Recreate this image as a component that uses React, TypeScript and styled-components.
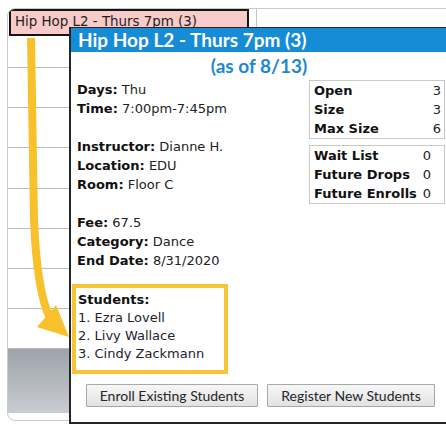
import React from 'react';
import styled, { createGlobalStyle } from 'styled-components';

const GlobalStyle = createGlobalStyle`
  html, body {
    margin: 0;
    padding: 0;
    background: #ffffff;
  }
`;

const Frame = styled.div`
  position: relative;
  width: 446px;
  height: 425px;
  overflow: hidden;
  background: #fff;
`;

// calendar grid that sits behind the class popup
const Calendar = styled.div`
  margin: 8px 0 0 7px;
  width: 460px;
  height: 413px;
  box-sizing: border-box;
  border: 1px solid #c9c9c9;
  border-radius: 8px 0 0 8px;
  display: flex;
  flex-direction: column;
  overflow: hidden;
`;

const Row = styled.div<{ $h: number; $open?: boolean }>`
  display: flex;
  height: ${(p) => p.$h}px;
  flex: none;
  border-bottom: ${(p) => (p.$open ? 'none' : '1px solid #bcbcbc')};
  box-sizing: border-box;
`;

const EventCell = styled.div`
  width: 240px;
  margin-left: 1px;
  box-sizing: border-box;
  border: 2px solid #151515;
  background: #f8caca;
  padding: 3px 0 0 4px;
  font: 13.4px/16px 'DejaVu Sans', sans-serif;
  color: #1e1e1e;
  white-space: nowrap;
  overflow: hidden;
`;

const Cell = styled.div`
  flex: 1;
  margin-left: 7px;
  border-left: 1px solid #c4c4c4;
`;

const GrayBand = styled.div`
  height: 64px;
  flex: none;
  background: linear-gradient(#9ea3ab, #c9ccd1);
`;

const ArrowLayer = styled.svg`
  position: absolute;
  left: 0;
  top: 0;
  pointer-events: none;
`;

const Popup = styled.div`
  position: absolute;
  left: 69px;
  top: 27px;
  width: 384px;
  height: 397px;
  box-sizing: border-box;
  background: #fff;
  border: 2px solid #262626;
  border-top-width: 1px;
  display: flex;
  flex-direction: column;
  font-family: 'DejaVu Sans', sans-serif;
  font-size: 13px;
  color: #222;
`;

const TitleBar = styled.div`
  height: 24px;
  background: #168bd6;
  color: #fff;
  font: bold 19px/24px Lato, sans-serif;
  padding-left: 7px;
  white-space: nowrap;
`;

const Subtitle = styled.div`
  text-align: center;
  color: #2088d2;
  font: bold 19px/24px Lato, sans-serif;
  margin-top: 2px;
  padding-right: 4px;
`;

const Body = styled.div`
  display: flex;
  justify-content: space-between;
  padding: 2px 6px 0 6px;
`;

const Info = styled.div`
  display: flex;
  flex-direction: column;
  gap: 19px;
  line-height: 19px;
  white-space: nowrap;
`;

const Group = styled.div``;

const Label = styled.b`
  color: #111;
`;

const Stats = styled.div`
  display: flex;
  flex-direction: column;
  gap: 6px;
  width: 136px;
`;

const StatBox = styled.div`
  border: 1px solid #c9c9c9;
  padding: 0 3px 0 4px;
`;

const StatTable = styled.table<{ $full?: boolean }>`
  border-collapse: collapse;
  width: ${(p) => (p.$full ? '100%' : 'auto')};
  font-size: 13px;
  line-height: 19px;
  td {
    padding: 0;
    white-space: nowrap;
  }
  td:first-child {
    font-weight: bold;
    color: #111;
    padding-right: 6px;
  }
  td:last-child {
    text-align: ${(p) => (p.$full ? 'right' : 'left')};
  }
`;

const Students = styled.div`
  margin: 14px 0 0 1px;
  width: 156px;
  height: 90px;
  box-sizing: border-box;
  border: 4px solid #f6c434;
  padding: 3px 0 0 2px;
  line-height: 18px;
  color: #24222e;
`;

const Buttons = styled.div`
  display: flex;
  gap: 9px;
  margin: 10px 0 0 15px;
`;

const Button = styled.button<{ $w: number }>`
  width: ${(p) => p.$w}px;
  height: 23px;
  border: 1px solid #a8a8a8;
  border-radius: 1px;
  background: linear-gradient(#f7f7f7, #e2e2e2);
  font: 14px/19px Lato, sans-serif;
  color: #26262c;
  padding: 0;
`;

const gridRows = [32, 40, 40, 41, 40, 40, 40, 40];

export default function App() {
  return (
    <Frame>
      <GlobalStyle />
      <Calendar>
        <Row $h={27} $open>
          <EventCell>Hip Hop L2 - Thurs 7pm (3)</EventCell>
          <Cell />
        </Row>
        {gridRows.map((h, i) => (
          <Row key={i} $h={h} />
        ))}
        <GrayBand />
      </Calendar>

      <ArrowLayer width="446" height="425" viewBox="0 0 446 425">
        <path
          d="M31 38 L34 220 Q37 292 50 318"
          fill="none"
          stroke="#f8c12c"
          strokeWidth="8"
        />
        <polygon points="37,327 56,305 69,337" fill="#f8c12c" />
      </ArrowLayer>

      <Popup>
        <TitleBar>Hip Hop L2 - Thurs 7pm (3)</TitleBar>
        <Subtitle>(as of 8/13)</Subtitle>
        <Body>
          <Info>
            <Group>
              <div><Label>Days:</Label> Thu</div>
              <div><Label>Time:</Label> 7:00pm-7:45pm</div>
            </Group>
            <Group>
              <div><Label>Instructor:</Label> Dianne H.</div>
              <div><Label>Location:</Label> EDU</div>
              <div><Label>Room:</Label> Floor C</div>
            </Group>
            <Group>
              <div><Label>Fee:</Label> 67.5</div>
              <div><Label>Category:</Label> Dance</div>
              <div><Label>End Date:</Label> 8/31/2020</div>
            </Group>
          </Info>
          <Stats>
            <StatBox>
              <StatTable $full>
                <tbody>
                  <tr><td>Open</td><td>3</td></tr>
                  <tr><td>Size</td><td>3</td></tr>
                  <tr><td>Max Size</td><td>6</td></tr>
                </tbody>
              </StatTable>
            </StatBox>
            <StatBox>
              <StatTable>
                <tbody>
                  <tr><td>Wait List</td><td>0</td></tr>
                  <tr><td>Future Drops</td><td>0</td></tr>
                  <tr><td>Future Enrolls</td><td>0</td></tr>
                </tbody>
              </StatTable>
            </StatBox>
          </Stats>
        </Body>
        <Students>
          <Label>Students:</Label>
          <div>1. Ezra Lovell</div>
          <div>2. Livy Wallace</div>
          <div>3. Cindy Zackmann</div>
        </Students>
        <Buttons>
          <Button $w={172}>Enroll Existing Students</Button>
          <Button $w={168}>Register New Students</Button>
        </Buttons>
      </Popup>
    </Frame>
  );
}
